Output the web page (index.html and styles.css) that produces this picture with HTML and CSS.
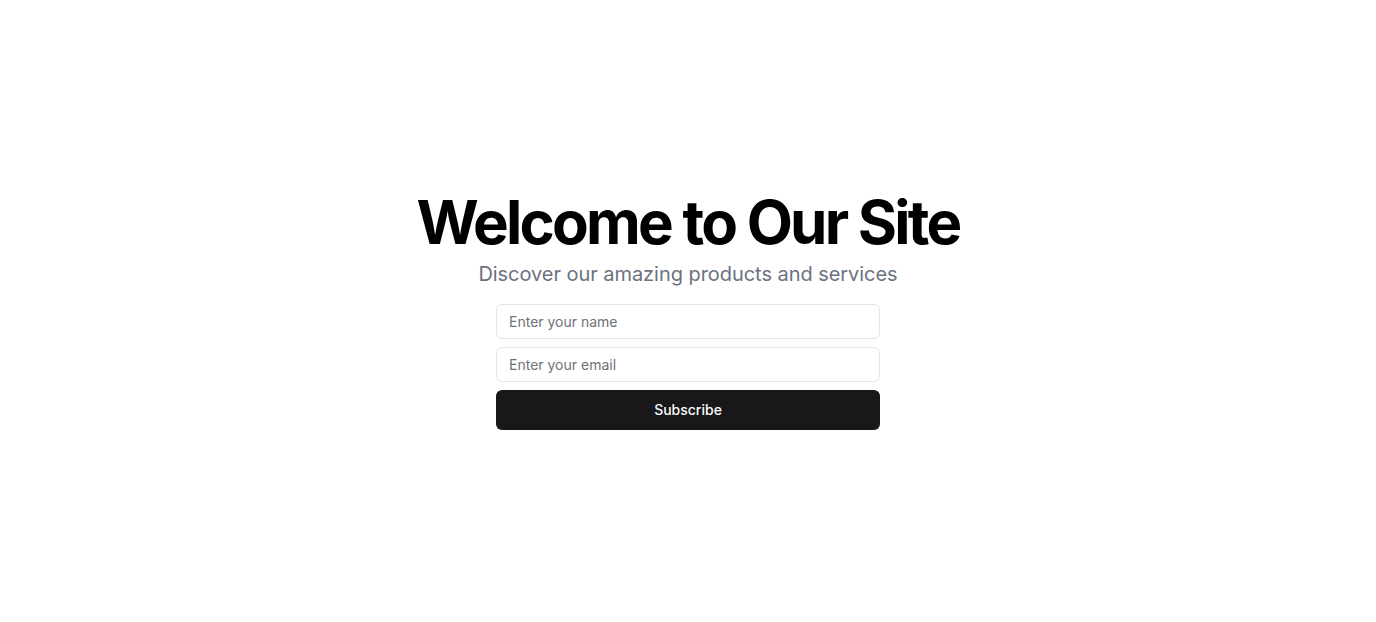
FILE: index.html
```html
<!DOCTYPE html>
<html lang="en">
<head>
<meta charset="utf-8">
<title>Welcome</title>
<link rel="stylesheet" href="styles.css">
</head>
<body>
<main class="page">
  <section class="hero">
    <h1 class="title">Welcome to Our Site</h1>
    <p class="subtitle">Discover our amazing products and services</p>
    <form class="form">
      <input class="field" type="text" placeholder="Enter your name">
      <input class="field" type="email" placeholder="Enter your email">
      <button class="button" type="button">Subscribe</button>
    </form>
  </section>
</main>
</body>
</html>
```
FILE: styles.css
```css
* { box-sizing: border-box; }
html, body { margin: 0; padding: 0; }
body {
  font-family: Inter, "Noto Sans", sans-serif;
  background: #ffffff;
  color: #09090b;
}
.page {
  min-height: 622px;
  display: flex;
  align-items: center;
  justify-content: center;
}
.hero {
  display: flex;
  flex-direction: column;
  align-items: center;
}
.title {
  margin: 0;
  font-size: 60px;
  line-height: 1;
  font-weight: 700;
  letter-spacing: -0.046em;
  color: #000;
}
.subtitle {
  margin: 8px 0 0;
  font-size: 20px;
  line-height: 28px;
  letter-spacing: -0.05px;
  color: #6b7280;
}
.form {
  margin-top: 16px;
  width: 384px;
  display: flex;
  flex-direction: column;
  gap: 8px;
}
.field {
  height: 35px;
  width: 100%;
  padding: 4px 12px;
  border: 1px solid #e4e4e7;
  border-radius: 6px;
  font-family: inherit;
  font-size: 14px;
  color: #09090b;
  background: #fff;
  outline: none;
}
.field::placeholder { color: #71717a; }
.button {
  height: 40px;
  width: 100%;
  padding: 0 16px 2px;
  border: none;
  border-radius: 6px;
  background: #18181b;
  color: #fafafa;
  font-family: inherit;
  font-size: 14px;
  font-weight: 500;
  cursor: pointer;
}
```
